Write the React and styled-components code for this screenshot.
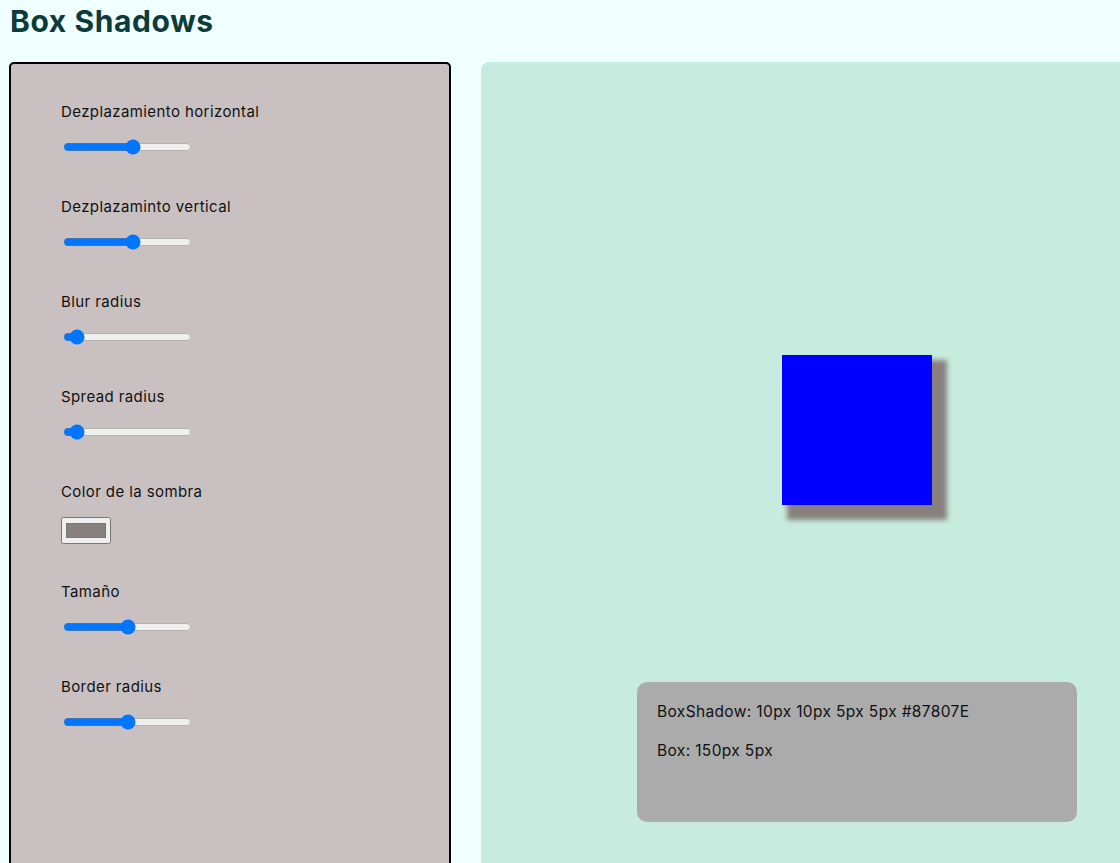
import React, { useState } from "react";
import styled, { createGlobalStyle } from "styled-components";

const GlobalStyle = createGlobalStyle`
  html, body {
    margin: 0;
    padding: 0;
    background: #f0ffff;
    font-family: Inter, "Noto Sans", "Liberation Sans", sans-serif;
    color: #000;
  }
  body { overflow: hidden; }
`;

const Page = styled.div`
  width: 1120px;
  height: 863px;
  overflow: hidden;
`;

const Title = styled.h1`
  margin: 3px 0 0 10px;
  font-size: 30px;
  line-height: 36px;
  font-weight: 700;
  color: #0b3b3a;
  letter-spacing: 0.6px;
`;

const Layout = styled.div`
  display: flex;
  gap: 30px;
  margin-top: 23px;
  padding-left: 9px;
  align-items: flex-start;
`;

const Controls = styled.section`
  flex: 0 0 auto;
  box-sizing: border-box;
  width: 442px;
  height: 830px;
  background: #c9c1c1;
  border: 2px solid #000;
  border-radius: 5px;
  padding: 39px 50px 0;
  display: flex;
  flex-direction: column;
`;

const Field = styled.div`
  display: flex;
  flex-direction: column;
  gap: 16px;
  margin-bottom: ${(p) => (p.$tight ? "39px" : "41px")};
`;

const Label = styled.label`
  font-size: 15px;
  line-height: 18px;
  color: #111;
  letter-spacing: 0.4px;
`;

const Range = styled.input.attrs({ type: "range" })`
  display: block;
  margin: 2px;
  width: 129px;
  height: 16px;
  accent-color: #0075ff;
`;

const ColorInput = styled.input.attrs({ type: "color" })`
  display: block;
  margin: 0;
  width: 50px;
  height: 27px;
`;

const Preview = styled.section`
  flex: 0 0 auto;
  box-sizing: border-box;
  width: 752px;
  height: 830px;
  background: #c7ecdf;
  border-radius: 8px;
  display: flex;
  flex-direction: column;
  align-items: center;
  padding-top: 293px;
  gap: 177px;
`;

const Box = styled.div`
  background: #0000ff;
`;

const Info = styled.div`
  box-sizing: border-box;
  width: 440px;
  height: 140px;
  background: #ababab;
  border-radius: 10px;
  padding: 20px 20px;
  display: flex;
  flex-direction: column;
  gap: 20px;
`;

const InfoLine = styled.p`
  margin: 0;
  font-size: 15.5px;
  line-height: 19px;
  color: #111;
  letter-spacing: 0.36px;
`;

export default function App() {
  const [h, setH] = useState(10);
  const [v, setV] = useState(10);
  const [blur, setBlur] = useState(5);
  const [spread, setSpread] = useState(5);
  const [color, setColor] = useState("#87807e");
  const [size, setSize] = useState(150);
  const [radius, setRadius] = useState(5);

  const shadow = `${h}px ${v}px ${blur}px ${spread}px ${color.toUpperCase()}`;

  return (
    <Page>
      <GlobalStyle />
      <Title>Box Shadows</Title>
      <Layout>
        <Controls>
          <Field>
            <Label>Dezplazamiento horizontal</Label>
            <Range min={-100} max={100} value={h} onChange={(e) => setH(+e.target.value)} />
          </Field>
          <Field>
            <Label>Dezplazaminto vertical</Label>
            <Range min={-100} max={100} value={v} onChange={(e) => setV(+e.target.value)} />
          </Field>
          <Field>
            <Label>Blur radius</Label>
            <Range min={0} max={100} value={blur} onChange={(e) => setBlur(+e.target.value)} />
          </Field>
          <Field>
            <Label>Spread radius</Label>
            <Range min={0} max={100} value={spread} onChange={(e) => setSpread(+e.target.value)} />
          </Field>
          <Field $tight>
            <Label>Color de la sombra</Label>
            <ColorInput value={color} onChange={(e) => setColor(e.target.value)} />
          </Field>
          <Field>
            <Label>Tamaño</Label>
            <Range min={0} max={300} value={size} onChange={(e) => setSize(+e.target.value)} />
          </Field>
          <Field>
            <Label>Border radius</Label>
            <Range min={0} max={10} value={radius} onChange={(e) => setRadius(+e.target.value)} />
          </Field>
        </Controls>
        <Preview>
          <Box style={{ width: size, height: size, boxShadow: shadow }} />
          <Info>
            <InfoLine>BoxShadow: {shadow}</InfoLine>
            <InfoLine>Box: {size}px {radius}px</InfoLine>
          </Info>
        </Preview>
      </Layout>
    </Page>
  );
}
